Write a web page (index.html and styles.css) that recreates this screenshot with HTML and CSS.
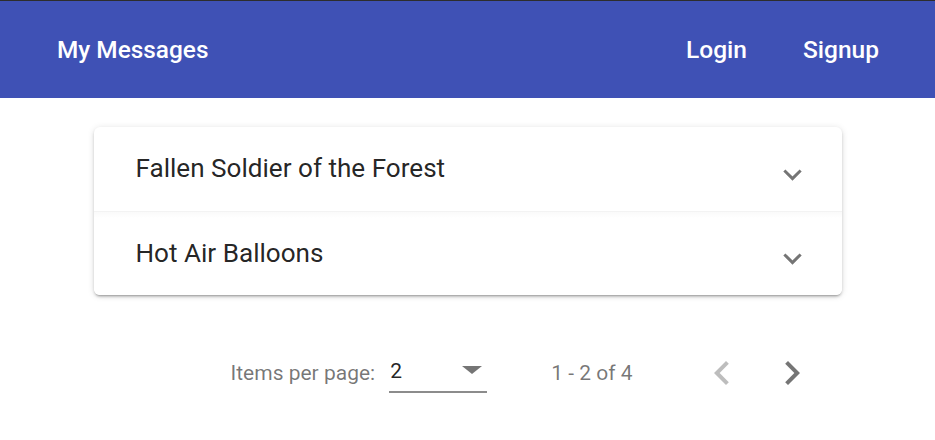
FILE: index.html
```html
<!DOCTYPE html>
<html lang="en">
<head>
<meta charset="utf-8">
<title>My Messages</title>
<link rel="stylesheet" href="styles.css">
</head>
<body>
<header class="toolbar">
  <span class="brand">My Messages</span>
  <nav class="nav">
    <a class="nav-link" href="#">Login</a>
    <a class="nav-link" href="#">Signup</a>
  </nav>
</header>
<main class="content">
  <section class="accordion">
    <div class="panel">
      <span class="panel-title">Fallen Soldier of the Forest</span>
      <span class="indicator"></span>
    </div>
    <div class="panel panel-next">
      <span class="panel-title">Hot Air Balloons</span>
      <span class="indicator"></span>
    </div>
  </section>
  <div class="paginator">
    <span class="page-label">Items per page:</span>
    <div class="select">
      <span class="select-value">2</span>
      <span class="select-arrow"></span>
    </div>
    <span class="range">1 - 2 of 4</span>
    <button class="nav-btn disabled" aria-label="Previous page">
      <svg viewBox="0 0 24 24" width="48" height="48"><path d="M15.41 7.41L14 6l-6 6 6 6 1.41-1.41L10.83 12z"/></svg>
    </button>
    <button class="nav-btn" aria-label="Next page">
      <svg viewBox="0 0 24 24" width="48" height="48"><path d="M10 6L8.59 7.41 13.17 12l-4.58 4.59L10 18l6-6z"/></svg>
    </button>
  </div>
</main>
</body>
</html>
```
FILE: styles.css
```css
html, body {
  margin: 0;
  padding: 0;
  background: #fff;
  font-family: Roboto, "Liberation Sans", sans-serif;
}

.toolbar {
  display: flex;
  align-items: center;
  justify-content: space-between;
  height: 97px;
  border-top: 1px solid #2d2d2d;
  background: #3f51b5;
  color: #fff;
  padding: 0 56px 0 57px;
}

.brand {
  font-size: 24.4px;
  font-weight: 500;
}

.nav {
  display: flex;
  gap: 56px;
}

.nav-link {
  color: #fff;
  text-decoration: none;
  font-size: 24.5px;
  font-weight: 500;
}

.content {
  width: 748px;
  margin: 29px auto 0;
}

.accordion {
  background: #fff;
  border-radius: 6px;
  box-shadow: 0 3px 2px -2px rgba(0,0,0,.22), 0 2px 3px 0 rgba(0,0,0,.15), 0 1px 7px 0 rgba(0,0,0,.12);
  overflow: hidden;
}

.panel {
  display: flex;
  align-items: center;
  justify-content: space-between;
  height: 84px;
  padding: 0 40px 0 42px;
  box-sizing: border-box;
}

.panel-next {
  border-top: 1px solid #f3f3f3;
  background: linear-gradient(#fafafa, #fff 6px);
}

.panel-title {
  font-size: 26.1px;
  color: rgba(0,0,0,.87);
  margin-top: -2px;
}

.indicator {
  width: 10px;
  height: 10px;
  border-style: solid;
  border-color: rgba(0,0,0,.54);
  border-width: 0 3px 3px 0;
  transform: rotate(45deg);
  margin: 4px 3px 0 0;
}

.paginator {
  display: flex;
  align-items: center;
  justify-content: flex-end;
  height: 78px;
  margin-top: 39px;
  padding-right: 20px;
  font-size: 21px;
  color: rgba(0,0,0,.54);
}

.page-label {
  margin-right: 14px;
}

.select {
  align-self: flex-start;
  display: flex;
  align-items: center;
  justify-content: space-between;
  width: 98px;
  box-sizing: border-box;
  padding: 8px 5px 9px 1px;
  margin-top: 19px;
  border-bottom: 2px solid #8c8c8c;
  color: rgba(0,0,0,.87);
}

.select-value {
  line-height: 1;
}

.select-arrow {
  width: 0;
  height: 0;
  border-left: 10px solid transparent;
  border-right: 10px solid transparent;
  border-top: 8px solid rgba(0,0,0,.54);
  margin-top: -4px;
}

.range {
  margin: 0 49px 0 64px;
}

.nav-btn {
  display: flex;
  align-items: center;
  justify-content: center;
  width: 60px;
  height: 60px;
  padding: 0;
  border: 0;
  background: none;
  fill: rgba(0,0,0,.54);
  margin-left: 10px;
}

.nav-btn.disabled {
  fill: rgba(0,0,0,.26);
}
```
